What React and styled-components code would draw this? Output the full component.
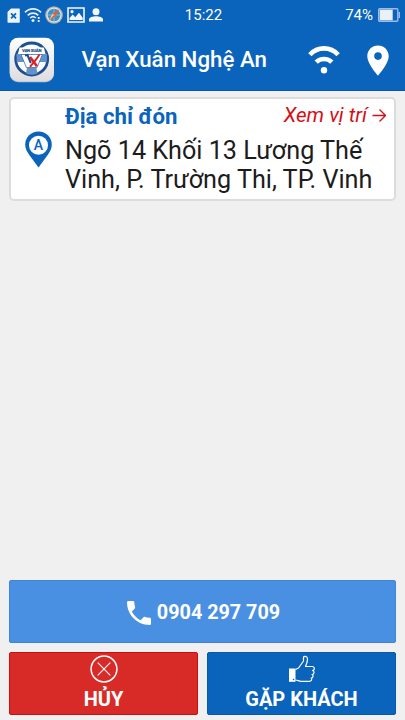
import React from 'react'
import styled, { createGlobalStyle } from 'styled-components'

const blue = '#0a64bb'
const lightBlue = '#4a90e2'
const red = '#d82b28'

const GlobalStyle = createGlobalStyle`
  * {
    box-sizing: border-box;
  }

  body {
    margin: 0;
    background-color: #f0f0f0;
    font-family: Roboto, 'Noto Sans', sans-serif;
  }

  svg {
    display: block;
    flex-shrink: 0;
  }
`

const Screen = styled.div`
  display: flex;
  flex-direction: column;
  width: 405px;
  height: 720px;
  overflow: hidden;
`

const Top = styled.div`
  height: 91px;
  background-color: ${blue};
  border-bottom: 1px solid #0657ae;
  color: white;
`

const StatusBar = styled.div`
  display: grid;
  grid-template-columns: 1fr auto 1fr;
  align-items: center;
  height: 28px;
  padding: 0 5px 0 7px;
  font-size: 15px;
`

const StatusGroup = styled.div`
  display: flex;
  align-items: center;
  justify-content: ${props => props.justify};
  gap: ${props => props.gap};
`

const StatusText = styled.span`
  line-height: ${props => props.height || '28px'};
`

const TitleBar = styled.header`
  display: flex;
  align-items: center;
  height: 64px;
  padding: 0 16px 0 9px;
`

const Title = styled.h1`
  flex: 1;
  margin: 0 0 2px 26.5px;
  font-size: 22.3px;
  font-weight: 500;
  line-height: 62px;
  white-space: nowrap;
`

const HeaderIcons = styled.div`
  display: flex;
  align-items: center;
  gap: 27px;
`

const Card = styled.section`
  display: flex;
  align-items: flex-start;
  height: 104px;
  margin: 5.5px 9px 0;
  padding: 3px 8px 0 14px;
  background-color: white;
  border: 2px solid #dcdcdc;
  border-radius: 5px;
`

const PinWrapper = styled.div`
  width: 40px;
  padding-top: 29px;
`

const CardBody = styled.div`
  flex: 1;
`

const CardHeader = styled.div`
  display: flex;
  justify-content: space-between;
  height: 34px;
  line-height: 28px;
  white-space: nowrap;
`

const CardTitle = styled.h2`
  margin: 0;
  color: ${blue};
  font-size: 22.2px;
  font-weight: 700;
`

const LocationLink = styled.a`
  display: flex;
  align-items: center;
  gap: 5px;
  height: 26px;
  color: #d40f17;
  font-size: 20.6px;
  font-style: italic;
`

const Address = styled.p`
  margin: 0;
  color: #1c1c1c;
  font-size: 25.2px;
  line-height: 29px;
  white-space: nowrap;
`

const AddressLine = styled.span`
  display: block;
`

const Actions = styled.footer`
  display: grid;
  grid-template-columns: 189px 189px;
  gap: 9px;
  margin-top: auto;
  padding: 0 9px 5px;
`

const Button = styled.button`
  display: flex;
  flex-direction: column;
  align-items: center;
  height: 63px;
  padding: 2px 0 0;
  border: 1px solid ${props => props.edge};
  border-radius: 2px;
  background-color: ${props => props.color};
  color: white;
  font-family: inherit;
  font-size: 20px;
  font-weight: 700;
  line-height: 32px;
`

const CallButton = styled(Button)`
  grid-column: 1 / -1;
  flex-direction: row;
  justify-content: center;
  gap: 6px;
  padding: 2px 0 0 2px;
  font-size: 19.8px;
`

const SimIcon = () => (
  <svg width="13" height="15" viewBox="0 0 13 15">
    <path d="M4 0.5H12a.8.8 0 0 1 .8.8V14a.8.8 0 0 1-.8.8H1.3a.8.8 0 0 1-.8-.8V4z" fill="#eef4fb" />
    <path d="M4 5.3l5 5M9 5.3l-5 5" stroke={blue} strokeWidth="1.7" />
  </svg>
)

const StatusWifiIcon = () => (
  <svg width="18" height="16" viewBox="0 0 18 16" fill="none" stroke="#e3eefa">
    <path d="M1 5.4C5.5.7 12.5.7 17 5.4" strokeWidth="1.7" />
    <path d="M3.7 8.3C6.7 5.3 11.3 5.3 14.3 8.3" strokeWidth="1.7" />
    <path d="M6.2 11C8 9.3 10 9.3 11.8 11" strokeWidth="1.7" />
    <circle cx="9" cy="13.5" r="1.5" fill="#e3eefa" stroke="none" />
    <path d="M14.7 10v2M14.7 13v2" strokeWidth="1.8" />
  </svg>
)

const CompassIcon = () => (
  <svg width="18" height="18" viewBox="0 0 18 18">
    <circle cx="9" cy="9" r="8.8" fill="#aeb3b5" />
    <circle cx="9" cy="9" r="7.6" fill="#e5e0d5" />
    <circle cx="9" cy="9" r="6.3" fill="#3e91c6" />
    <path d="M9 3v12M3 9h12" stroke="#a4cbe0" strokeWidth=".7" />
    <path d="M14.3 3.6L10.4 10.4 7.6 7.6z" fill="#ef5d27" />
    <path d="M3.7 14.4L7.6 7.6l2.8 2.8z" fill="#f2c6a2" />
    <path d="M3.7 14.4L9 9l1.4 1.4z" fill="#d85f32" />
  </svg>
)

const PictureIcon = () => (
  <svg width="18" height="16" viewBox="0 0 18 16">
    <path d="M1 1h16v14H1z" fill="none" stroke="#f2f7fc" strokeWidth="1.6" />
    <path d="M2.5 13V11l3.2-3.5 2.5 2.7L12 5.7l3.7 5.1V13z" fill="#f2f7fc" />
    <circle cx="5" cy="4.7" r="1.6" fill="#f2f7fc" />
  </svg>
)

const PersonIcon = () => (
  <svg width="15" height="14" viewBox="-1 0 15 14" fill="#f2f7fc">
    <circle cx="7" cy="3.8" r="3.5" />
    <path d="M0 13.5v-2C0 9.5 4 8.3 7 8.3s7 1.2 7 3.2v2z" />
  </svg>
)

const BatteryIcon = () => (
  <svg width="22" height="14" viewBox="0 0 22 14">
    <rect x=".7" y=".7" width="19.1" height="12.6" rx="1" fill="none" stroke="#9dbaf0" strokeWidth="1.4" />
    <path d="M1.7 1.7h13v10.6H1.7z" fill="#e8f0f8" />
    <path d="M20.5 4H22v6h-1.5z" fill="#9dbaf0" />
  </svg>
)

const AppLogo = () => (
  <svg width="46" height="46" viewBox="0 0 46 46">
    <defs>
      <linearGradient id="tile" x2="0" y2="1">
        <stop offset="0" stopColor="#ffffff" />
        <stop offset="1" stopColor="#dddddf" />
      </linearGradient>
    </defs>
    <rect x=".7" y="1" width="44.3" height="44.3" rx="8.5" fill="#bfc4cb" />
    <rect x=".7" y=".7" width="44.3" height="43.6" rx="8.5" fill="url(#tile)" />
    <circle cx="22.7" cy="22" r="16" fill="#fafcff" stroke="#1f4f91" strokeWidth="2.8" />
    <path d="M7.5 17l5-1.5 4 9.5H7.7z" fill="#6293c8" />
    <path d="M37.9 17l-5-1.5-4 9.5h8.8z" fill="#6293c8" />
    <path d="M18 30.5h9.4l1 6c-3.5 1.6-7.8 1.6-11.4 0z" fill="#6293c8" />
    <path d="M12 17.5h21.4L28 30.5H17.4z" fill="#fff" stroke="#3b6dac" strokeWidth=".8" />
    <path d="M10.5 10.5h24.4l1.5 6.5H9z" fill="#fff" />
    <text x="13" y="14.8" textLength="19.5" fontSize="4.4" fontWeight="900" fill="#174787">VẠN XUÂN</text>
    {/* blue V crossing into the red X */}
    <path d="M16 18.5l2.5-.5 3.3 8" fill="none" stroke="#174f9b" strokeWidth="2" />
    <path d="M21 20l7 9.3" stroke="#dd2028" strokeWidth="2.6" />
    <path d="M30.5 17.5l-3 4.500-6.500 7.800" fill="none" stroke="#dd2028" strokeWidth="2" />
  </svg>
)

const WifiIcon = () => (
  <svg width="32" height="30" viewBox="0 0 32 30" fill="none" stroke="white" strokeWidth="4.6">
    <path d="M1.9 9.7C9.5 1.300 22.5 1.300 30.100 9.700" />
    <path d="M8.2 17.2C12.3 13 19.7 13 23.8 17.2" />
    <circle cx="16" cy="25.3" r="3.2" fill="white" stroke="none" />
  </svg>
)

const PlaceIcon = () => (
  <svg width="22" height="31" viewBox="0 0 22 31">
    <path
      d="M11 .5C5 .5.3 5.1.3 11.2.3 18.8 11 30.5 11 30.5S21.7 18.8 21.7 11.2C21.7 5.1 17 .5 11 .5zm0 6.8a3.8 3.8 0 1 1 0 7.6 3.8 3.8 0 0 1 0-7.6z"
      fill="white"
    />
  </svg>
)

const AddressPin = () => (
  <svg width="27" height="37" viewBox="0 0 27 37">
    <path d="M13.5.5C6 .5.2 6.3.2 13.5c0 4.500 2 7.500 4.300 10.800L13.500 36.500l9-12.200c2.300-3.300 4.300-6.300 4.300-10.800C26.800 6.300 21 .5 13.500.5z" fill={blue} />
    <circle cx="13.5" cy="14.3" r="9.5" fill="white" />
    <text x="13.5" y="19.3" textAnchor="middle" fontSize="14" fontWeight="500" fill={blue}>A</text>
  </svg>
)

const ArrowIcon = () => (
  <svg width="14" height="14" viewBox="0 0 14 14" fill="none" stroke="#d40f17" strokeWidth="1.3">
    <path d="M.5 7.5H13M7.500 1.500l6 6-6 6" />
  </svg>
)

const PhoneIcon = () => (
  <svg width="24" height="24" viewBox="3 3 18 18">
    <path
      d="M6.62 10.79c1.44 2.83 3.76 5.14 6.59 6.59l2.2-2.2c.27-.27.67-.36 1.02-.24 1.12.37 2.33.57 3.57.57.55 0 1 .45 1 1V20c0 .55-.45 1-1 1C10.61 21 3 13.39 3 4c0-.55.45-1 1-1h3.5c.55 0 1 .45 1 1 0 1.25.2 2.45.57 3.57.11.35.03.74-.25 1.02z"
      fill="white"
    />
  </svg>
)

const CancelIcon = () => (
  <svg width="28" height="28" viewBox="0 0 28 28" fill="none" stroke="white">
    <circle cx="14" cy="14" r="12.9" strokeWidth="1.5" />
    <path d="M7.7 7.7l12.6 12.6M20.3 7.7L7.7 20.3" strokeWidth="1.1" />
  </svg>
)

const ThumbIcon = () => (
  <svg width="28" height="28" viewBox="0 0 28 28">
    <path d="M1 13.5h6.5v13.3H1z" fill="white" />
    <circle cx="5.5" cy="24.5" r=".8" fill={blue} />
    <path
      d="M7.5 14.5l3-1.5 5-7V2.5c0-1.5 3.8-2 4 1.5.2 3-1.5 5.5-2 7.5h6.5c3 0 3 4 .5 4 2.3.5 2 4-.5 4 1.7.7 1.3 3.5-.8 3.6 1 1.4.3 3.2-2 3.2h-8c-2.5 0-3.5-1.3-5.7-1.3"
      fill="none"
      stroke="white"
      strokeWidth="1.2"
      strokeLinejoin="round"
    />
  </svg>
)

export default function App () {
  return (
    <Screen>
      <GlobalStyle />
      <Top>
        <StatusBar>
          <StatusGroup justify='flex-start' gap='3.5px'>
            <SimIcon />
            <StatusWifiIcon />
            <CompassIcon />
            <PictureIcon />
            <PersonIcon />
          </StatusGroup>
          <StatusText height='30px'>15:22</StatusText>
          <StatusGroup justify='flex-end' gap='5px'>
            <StatusText>74%</StatusText>
            <BatteryIcon />
          </StatusGroup>
        </StatusBar>
        <TitleBar>
          <AppLogo />
          <Title>Vạn Xuân Nghệ An</Title>
          <HeaderIcons>
            <WifiIcon />
            <PlaceIcon />
          </HeaderIcons>
        </TitleBar>
      </Top>

      <Card>
        <PinWrapper>
          <AddressPin />
        </PinWrapper>
        <CardBody>
          <CardHeader>
            <CardTitle>Địa chỉ đón</CardTitle>
            <LocationLink>
              Xem vị trí
              <ArrowIcon />
            </LocationLink>
          </CardHeader>
          <Address>
            <AddressLine>Ngõ 14 Khối 13 Lương Thế</AddressLine>
            <AddressLine>Vinh, P. Trường Thi, TP. Vinh</AddressLine>
          </Address>
        </CardBody>
      </Card>

      <Actions>
        <CallButton color={lightBlue} edge='#3f84d8'>
          <PhoneIcon />
          0904 297 709
        </CallButton>
        <Button color={red} edge='#cf0d10'>
          <CancelIcon />
          HỦY
        </Button>
        <Button color={blue} edge='#0759ad'>
          <ThumbIcon />
          GẶP KHÁCH
        </Button>
      </Actions>
    </Screen>
  )
}
